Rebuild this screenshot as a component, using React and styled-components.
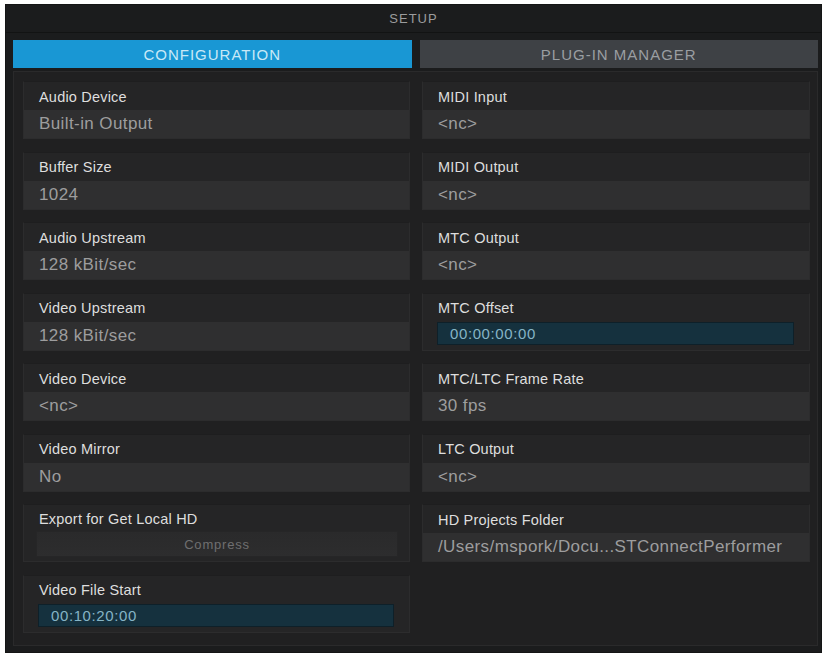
import React from 'react'
import styled, { createGlobalStyle } from 'styled-components'

const GlobalStyle = createGlobalStyle`
  html, body { margin: 0; padding: 0; background: #ffffff; }
  body { font-family: "Liberation Sans", Arial, sans-serif; }
`

const Window = styled.div`
  margin: 4px 4px 0 5px;
  width: 817px;
  height: 649px;
  box-sizing: border-box;
  background: #1b1c1d;
  border: 1px solid #141515;
  display: flex;
  flex-direction: column;
`

const TitleBar = styled.div`
  height: 27px;
  display: flex;
  align-items: center;
  justify-content: center;
  font-size: 13px;
  letter-spacing: 1px;
  color: #9b9c9d;
  border-bottom: 1px solid #121313;
`

const Tabs = styled.div`
  display: flex;
  gap: 8px;
  padding: 7px 3px 0 7px;
  height: 28px;
`

const Tab = styled.div`
  flex: 1;
  display: flex;
  align-items: center;
  justify-content: center;
  font-size: 15px;
  letter-spacing: 1px;
  background: ${p => (p.active ? '#1997d4' : '#3e4145')};
  color: ${p => (p.active ? '#c9e9f7' : '#9a9ea2')};
`

const Panel = styled.div`
  margin: 3px 3px 6px 7px;
  flex: 1;
  background: #202021;
  border: 1px solid #2a2a2b;
  box-sizing: border-box;
  padding: 9px 0 0 9px;
  display: grid;
  grid-template-columns: 387px 388px;
  column-gap: 12px;
`

const Column = styled.div`
  display: flex;
  flex-direction: column;
  gap: 12.5px;
`

const Card = styled.div`
  height: 58px;
  box-sizing: border-box;
  background: #252526;
  border: 1px solid #2c2c2d;
  border-top-color: #1e1e1f;
  display: flex;
  flex-direction: column;
`

const Label = styled.div`
  height: 27px;
  display: flex;
  align-items: center;
  padding-left: 15px;
  padding-top: 1px;
  font-size: 14.5px;
  letter-spacing: 0.2px;
  color: #dedede;
`

const Value = styled.div`
  flex: 1;
  display: flex;
  align-items: center;
  padding-left: 15px;
  background: #2f2f30;
  font-size: 17px;
  letter-spacing: 0.4px;
  color: #9d9d9e;
  white-space: nowrap;
`

const FieldRow = styled.div`
  flex: 1;
  display: flex;
  align-items: center;
  padding: 0 ${p => (p.wide ? '11px' : '15px')} 4px ${p => (p.wide ? '12px' : '14px')};
`

const TimeInput = styled.div`
  flex: 1;
  height: 23px;
  box-sizing: border-box;
  display: flex;
  align-items: center;
  padding-left: 12px;
  background: #15313e;
  border: 1px solid #0e2029;
  font-size: 15px;
  letter-spacing: 0.6px;
  color: #86b4c6;
`

const CompressButton = styled.div`
  flex: 1;
  height: 24px;
  display: flex;
  align-items: center;
  justify-content: center;
  background: linear-gradient(#2a2a2b, #2d2d2e);
  border: 1px solid #262627;
  font-size: 13px;
  letter-spacing: 0.8px;
  color: #6f6f70;
`

const left = [
  { label: 'Audio Device', value: 'Built-in Output' },
  { label: 'Buffer Size', value: '1024' },
  { label: 'Audio Upstream', value: '128 kBit/sec' },
  { label: 'Video Upstream', value: '128 kBit/sec' },
  { label: 'Video Device', value: '<nc>' },
  { label: 'Video Mirror', value: 'No' },
  { label: 'Export for Get Local HD', button: 'Compress' },
  { label: 'Video File Start', time: '00:10:20:00' },
]

const right = [
  { label: 'MIDI Input', value: '<nc>' },
  { label: 'MIDI Output', value: '<nc>' },
  { label: 'MTC Output', value: '<nc>' },
  { label: 'MTC Offset', time: '00:00:00:00' },
  { label: 'MTC/LTC Frame Rate', value: '30 fps' },
  { label: 'LTC Output', value: '<nc>' },
  { label: 'HD Projects Folder', value: '/Users/mspork/Docu...STConnectPerformer' },
]

const Setting = ({ item }) => (
  <Card>
    <Label>{item.label}</Label>
    {item.time ? (
      <FieldRow><TimeInput>{item.time}</TimeInput></FieldRow>
    ) : item.button ? (
      <FieldRow wide><CompressButton>{item.button}</CompressButton></FieldRow>
    ) : (
      <Value>{item.value}</Value>
    )}
  </Card>
)

export default function App() {
  return (
    <>
      <GlobalStyle />
      <Window>
        <TitleBar>SETUP</TitleBar>
        <Tabs>
          <Tab active>CONFIGURATION</Tab>
          <Tab>PLUG-IN MANAGER</Tab>
        </Tabs>
        <Panel>
          <Column>
            {left.map(item => <Setting key={item.label} item={item} />)}
          </Column>
          <Column>
            {right.map(item => <Setting key={item.label} item={item} />)}
          </Column>
        </Panel>
      </Window>
    </>
  )
}
